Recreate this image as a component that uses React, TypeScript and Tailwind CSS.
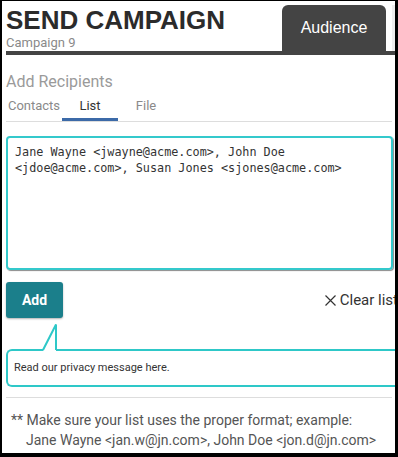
import React from 'react';

const sans = { fontFamily: 'Roboto, "Liberation Sans", sans-serif' };

const App: React.FC = () => {
  return (
    <div className="w-[398px] h-[457px] overflow-hidden bg-white border-l-2 border-t border-r-[3px] border-b-4 border-black" style={sans}>
      <div className="pl-[4px] w-[420px]">
        {/* Header */}
        <div className="flex items-end w-[389px] border-b-[4px] border-[#444] pt-[4px]">
          <div className="flex flex-col flex-1">
            <h1 className="font-['Liberation_Sans',Arial,sans-serif] font-bold text-[26px] leading-[28px] text-[#2b2b2b]">
              SEND CAMPAIGN
            </h1>
            <p className="text-[13px] leading-[17px] text-[#8a8a8a]">Campaign 9</p>
          </div>
          <div className="flex items-end gap-[6px]">
            <div className="w-[104px] h-[46px] rounded-t-[6px] bg-[#444] flex items-center justify-center text-white text-[16px] font-['Liberation_Sans',Arial,sans-serif]">
              Audience
            </div>
            <div className="w-[3px] h-[46px] bg-[#eeeeee]" />
          </div>
        </div>

        {/* Recipients */}
        <h2 className="mt-[17px] text-[16px] leading-[20px] text-[#9a9a9a]">Add Recipients</h2>
        <div className="mt-[5px] flex w-[386px] border-b border-[#dddddd] text-[13px] leading-[16px]">
          <button className="w-[56px] pb-[4px] pt-[1px] border-b-[3px] border-transparent text-[#8a8a8a]">Contacts</button>
          <button className="w-[56px] pb-[4px] pt-[1px] border-b-[3px] border-[#3c6aa8] text-[#333]">List</button>
          <button className="w-[56px] pb-[4px] pt-[1px] border-b-[3px] border-transparent text-[#8a8a8a]">File</button>
        </div>

        <textarea
          readOnly
          defaultValue="Jane Wayne <jwayne@acme.com>, John Doe <jdoe@acme.com>, Susan Jones <sjones@acme.com>"
          className="mt-[14px] block w-[387px] h-[134px] resize-none rounded-[4px] border-2 border-[#34c9cc] shadow-[1px_1px_1px_#8a8a8a] px-[7px] pt-[6px] text-[11.8px] leading-[16px] text-[#333] outline-none font-['DejaVu_Sans_Mono',monospace]"
        />

        {/* Actions */}
        <div className="mt-[12px] flex items-center justify-between w-[392px]">
          <button className="w-[57px] h-[36px] rounded-[3px] bg-[#1b7f8b] shadow-[0_1px_2px_rgba(0,0,0,0.3)] text-white font-bold text-[14px]">
            Add
          </button>
          <button className="flex items-center gap-[4px] text-[15px] text-[#333]">
            <svg width="11" height="11" viewBox="0 0 11 11" fill="none" stroke="#333" strokeWidth="1.2">
              <path d="M0.5 0.5 L10.5 10.5 M10.5 0.5 L0.5 10.5" />
            </svg>
            Clear list
          </button>
        </div>

        {/* Bubble */}
        <div className="relative mt-[31px] w-[412px]">
          <svg className="absolute left-[30px] top-[-26px]" width="22" height="28" viewBox="0 0 22 28">
            <path d="M7 28 L20 1 L20 28 Z" fill="white" />
            <path d="M7 27 L20 1.5 L20 27" fill="none" stroke="#2ec8c8" strokeWidth="2" />
          </svg>
          <div className="h-[38px] rounded-l-[6px] border-2 border-r-0 border-[#2ec8c8] flex items-center pl-[6px] text-[11px] text-[#333]">
            Read our privacy message here.
          </div>
        </div>

        {/* Footer */}
        <div className="mt-[10px] w-[386px] border-t border-[#dddddd] pt-[12px] pl-[5px] text-[14px] leading-[20px] text-[#555]">
          <p>** Make sure your list uses the proper format; example:</p>
          <p className="pl-[15px]">Jane Wayne &lt;jan.w@jn.com&gt;, John Doe &lt;jon.d@jn.com&gt;</p>
        </div>
      </div>
    </div>
  );
};

export default App;
